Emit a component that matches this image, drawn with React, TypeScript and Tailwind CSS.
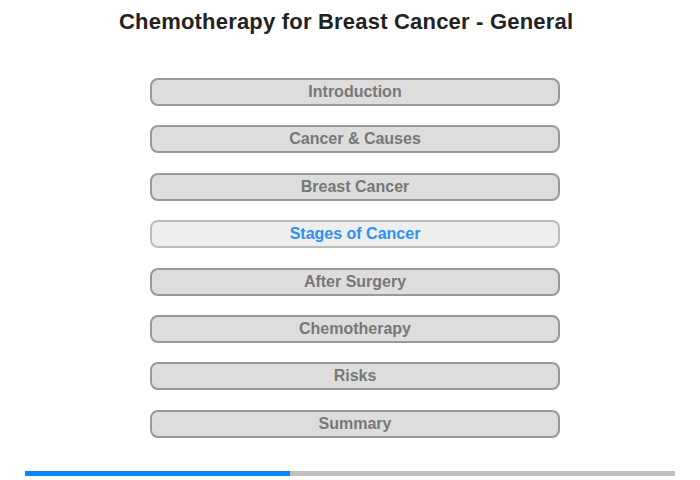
const items = [
  'Introduction',
  'Cancer & Causes',
  'Breast Cancer',
  'Stages of Cancer',
  'After Surgery',
  'Chemotherapy',
  'Risks',
  'Summary',
]

const activeItem = 'Stages of Cancer'

export default function App() {
  return (
    <div className="h-[480px] w-[700px] bg-white font-['Liberation_Sans',Arial,sans-serif]">
      <h1 className="pt-[9px] pl-[119px] text-[22px] leading-[26px] font-bold tracking-[0.2px] text-[#222]">
        Chemotherapy for Breast Cancer - General
      </h1>

      <nav className="mt-[43px] ml-[150px] flex w-[410px] flex-col gap-[19.4px]">
        {items.map((item) => {
          const active = item === activeItem
          return (
            <button
              className={
                active
                  ? 'h-[28px] rounded-[8px] border-2 border-[#bbbbbb] bg-[#eeeeee] text-[16px] font-bold text-[#2e90f0]'
                  : 'h-[28px] rounded-[8px] border-2 border-[#999999] bg-[#dddddd] text-[16px] font-bold text-[#777777]'
              }
              key={item}
              type="button"
            >
              {item}
            </button>
          )
        })}
      </nav>

      <div className="mt-[33px] ml-[25px] flex h-[5px] w-[650px]">
        <div className="w-[265px] bg-[#0a84ff]" />
        <div className="flex-1 bg-[#c0c0c0]" />
      </div>
    </div>
  )
}
